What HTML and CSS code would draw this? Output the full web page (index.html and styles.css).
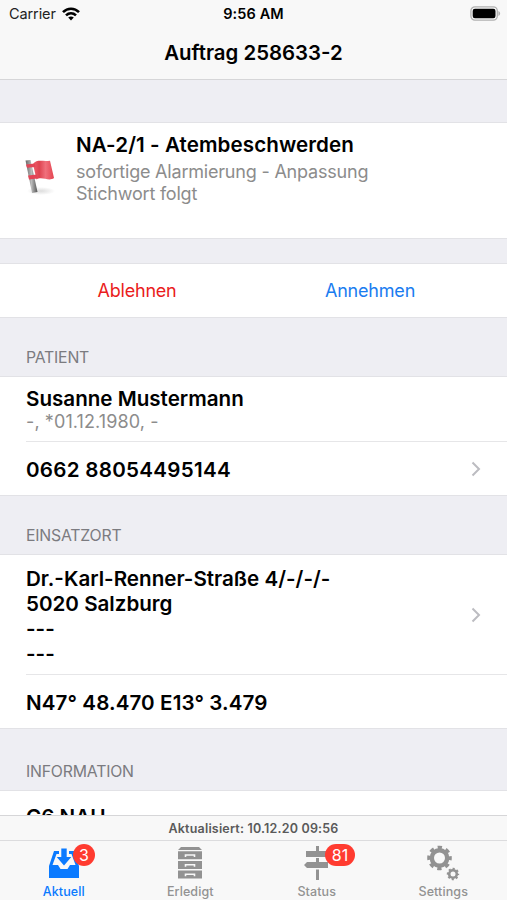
FILE: index.html
```html
<!DOCTYPE html>
<html lang="de">
<head>
    <meta charset="UTF-8">
    <meta name="viewport" content="width=device-width, initial-scale=1.0">
    <title>Auftrag 258633-2</title>
    <link rel="stylesheet" href="styles.css">
</head>
<body>
    <div class="app">
        <header class="top">
            <div class="status-bar">
                <div class="carrier">
                    <span>Carrier</span>
                    <svg class="wifi" viewBox="0 0 18 14" width="18" height="14">
                        <g fill="none" stroke="#000" stroke-width="2.6">
                            <path d="M1 5.2C5.5.6 12.500.6 17 5.200"/>
                            <path d="M4 8.400c2.900-2.700 7.100-2.700 10 0"/>
                        </g>
                        <path d="M6.200 10.500c1.700-1.300 3.900-1.300 5.600 0L9 13.400z"/>
                    </svg>
                </div>
                <span class="clock">9:56 AM</span>
                <svg class="battery" viewBox="0 0 31 15" width="31" height="15">
                    <rect x=".9" y=".9" width="26.400" height="13.200" rx="4" fill="#f8f8f8" stroke="#b0b0b0" stroke-width="1.300"/>
                    <rect x="2.700" y="2.700" width="22.800" height="9.600" rx="2.200"/>
                    <path d="M28.400 5c2.300.9 2.300 4.100 0 5z" fill="#b0b0b0"/>
                </svg>
            </div>
            <h1>Auftrag 258633-2</h1>
        </header>

        <main class="content">
            <section class="group alarm">
                <svg class="flag" viewBox="0 0 34 40" width="34" height="40">
                    <defs>
                        <linearGradient id="pole" x1="0" x2="1" y1="0" y2="0">
                            <stop offset="0" stop-color="#666"/>
                            <stop offset=".5" stop-color="#bbb"/>
                            <stop offset="1" stop-color="#555"/>
                        </linearGradient>
                        <linearGradient id="cloth" x1="0" x2="1" y1="0" y2="0">
                            <stop offset="0" stop-color="#f0606c"/>
                            <stop offset=".3" stop-color="#de4350"/>
                            <stop offset=".6" stop-color="#f0707c"/>
                            <stop offset="1" stop-color="#e44450"/>
                        </linearGradient>
                        <radialGradient id="shade">
                            <stop offset="0" stop-color="#ddd"/>
                            <stop offset="1" stop-color="#fff"/>
                        </radialGradient>
                    </defs>
                    <ellipse cx="20" cy="34" rx="14" ry="4" fill="url(#shade)"/>
                    <path d="M4.500 3.500l5-.6 7 32-5.500 1z" fill="url(#pole)"/>
                    <path d="M12 7c4-5 8-2.500 17-3.300L33 21c-5 4-12-2-17.500 1.500z" fill="url(#cloth)"/>
                    <path d="M5 7.500l9-1 .5 3.500-8.500.800zM7 18.500l9-1 .5 4-8.500 1z" fill="#e34556"/>
                </svg>
                <div>
                    <h2 class="alarm-title">NA-2/1 - Atembeschwerden</h2>
                    <p class="alarm-text">sofortige Alarmierung - Anpassung<br>Stichwort folgt</p>
                </div>
            </section>

            <section class="group actions">
                <button class="decline">Ablehnen</button>
                <button class="accept">Annehmen</button>
            </section>

            <h3 class="caption patient">PATIENT</h3>
            <section class="group">
                <div class="row person">
                    <h2 class="name">Susanne Mustermann</h2>
                    <p class="born">-, *01.12.1980, -</p>
                </div>
                <div class="row phone">
                    <h2>0662 88054495144</h2>
                    <svg class="chevron" viewBox="0 0 10 16" width="10" height="16"><path d="M1.500 1.500L8 8l-6.500 6.500"/></svg>
                </div>
            </section>

            <h3 class="caption place">EINSATZORT</h3>
            <section class="group">
                <div class="row address">
                    <h2>Dr.-Karl-Renner-Straße 4/-/-/-<br>5020 Salzburg<br>---<br>---</h2>
                    <svg class="chevron" viewBox="0 0 10 16" width="10" height="16"><path d="M1.500 1.500L8 8l-6.500 6.500"/></svg>
                </div>
                <div class="row coords">
                    <h2>N47° 48.470 E13° 3.479</h2>
                </div>
            </section>

            <h3 class="caption info">INFORMATION</h3>
            <section class="group last">
                <h2>C6 NAH</h2>
            </section>
        </main>

        <footer>
            <div class="updated">Aktualisiert: 10.12.20 09:56</div>
            <nav class="tabs">
                <a class="tab active">
                    <svg viewBox="0 0 30 32" width="30" height="32">
                        <path fill-rule="evenodd" d="M5 4h5v3H7.500L3.500 18H9l2.500 4h7l2.500-4h5.500L22.500 7H20V4h5l5 15v12H0V19z"/>
                        <path d="M12.300 1.500h5.400V10h4.600L15 18.500 7.700 10h4.600z"/>
                    </svg>
                    <span class="badge">3</span>
                    <span class="label">Aktuell</span>
                </a>
                <a class="tab">
                    <svg viewBox="0 0 26 34" width="26" height="34">
                        <path d="M4 1h18l3 3H1zM1 5.300h24v8H1zM1 15h24v8H1zM1 24.600h24v8H1z"/>
                        <path class="handle" d="M8.500 11V9h9v2M8.500 20.700v-2h9v2M8.500 30.300v-2h9v2"/>
                    </svg>
                    <span class="label">Erledigt</span>
                </a>
                <a class="tab">
                    <svg viewBox="0 0 26 36" width="26" height="36">
                        <path d="M12 1h3v5h8l3 3-3 3H2V6h10zM12 13h3v4h9v6H3l-3-3 3-3h9zM12 24.500h3V35h-3z"/>
                    </svg>
                    <span class="badge wide">81</span>
                    <span class="label">Status</span>
                </a>
                <a class="tab">
                    <svg viewBox="0 0 34 36" width="34" height="36">
                        <g fill="none" stroke="#929292">
                            <circle cx="13.500" cy="13" r="7.700" stroke-width="4.400"/>
                            <circle cx="13.500" cy="13" r="10.600" stroke-width="3.400" stroke-dasharray="4.300 4.025" stroke-dashoffset="2.150"/>
                            <circle cx="27" cy="29" r="3.800" stroke-width="2.600"/>
                            <circle cx="27" cy="29" r="5.200" stroke-width="2" stroke-dasharray="2.100 1.984" stroke-dashoffset="1.050"/>
                        </g>
                    </svg>
                    <span class="label">Settings</span>
                </a>
            </nav>
        </footer>
    </div>
</body>
</html>
```
FILE: styles.css
```css
* {
    box-sizing: border-box;
}

body {
    margin: 0;
    font-family: Inter, "Liberation Sans", sans-serif;
    color: #000;
}

h1, h2, h3, p {
    margin: 0;
}

.app {
    display: flex;
    flex-direction: column;
    width: 507px;
    height: 900px;
    overflow: hidden;
    background-color: #eeeef3;
}

.top {
    flex: none;
    height: 80px;
    background-color: #f8f8f8;
    border-bottom: 1px solid #d6d6d8;
}

.status-bar {
    display: grid;
    grid-template-columns: 1fr auto 1fr;
    align-items: center;
    height: 27px;
    padding: 0 6px 0 9px;
}

.carrier {
    display: flex;
    align-items: center;
    gap: 6px;
    font-size: 14.5px;
    letter-spacing: -0.1px;
    color: #222;
}

.clock {
    margin-right: 3px;
    font-size: 14.5px;
    font-weight: 600;
    letter-spacing: 0.1px;
}

.battery {
    justify-self: end;
}

h1 {
    font-size: 20.4px;
    font-weight: 600;
    line-height: 51px;
    text-align: center;
}

h2 {
    font-size: 20.6px;
    font-weight: 600;
    line-height: 25px;
    white-space: nowrap;
}

.content {
    flex: 1;
    min-height: 0;
    overflow: hidden;
    padding-top: 42px;
}

.group {
    background-color: #fff;
    border-top: 1px solid #e2e2e6;
    border-bottom: 1px solid #e2e2e6;
}

.alarm {
    display: flex;
    gap: 21px;
    height: 117px;
    padding: 9px 0 0 21px;
}

.alarm-title {
    letter-spacing: 0.08px;
}

.flag {
    margin-top: 25px;
}

.alarm-text {
    margin-top: 4px;
    font-size: 18px;
    letter-spacing: -0.2px;
    line-height: 22px;
    color: #8c8c8c;
}

.actions {
    display: grid;
    grid-template-columns: 233px 233px;
    justify-content: center;
    height: 55px;
    margin-top: 24px;
}

button {
    padding: 0;
    border: none;
    background: none;
    font: inherit;
    font-size: 18px;
    letter-spacing: -0.2px;
}

.decline {
    color: #ea1c20;
}

.accept {
    color: #1a7cf0;
}

.caption {
    height: 58px;
    padding: 30px 26px 0;
    font-size: 15.8px;
    font-weight: 400;
    letter-spacing: -0.2px;
    line-height: 20px;
    color: #7b7b80;
}

.row {
    display: flex;
    align-items: center;
    justify-content: space-between;
    margin-left: 26px;
    padding-right: 26px;
}

.row + .row {
    border-top: 1px solid #e6e6e8;
}

.person {
    display: block;
    height: 64px;
    padding-top: 9px;
}

.born {
    font-size: 18px;
    letter-spacing: 0.1px;
    line-height: 22px;
    color: #8c8c8c;
}

.phone {
    height: 54px;
}

.phone h2 {
    padding-top: 1px;
    letter-spacing: 0.27px;
}

.chevron path {
    fill: none;
    stroke: #bcbcc1;
    stroke-width: 2;
}

.address {
    height: 119px;
}

.address h2 {
    padding-top: 2px;
}

.coords {
    height: 54px;
}

.coords h2 {
    padding-top: 2px;
    letter-spacing: 0.1px;
}

.info {
    height: 61px;
    padding-top: 33px;
}

.last {
    height: 90px;
    padding: 13px 26px;
}

footer {
    flex: none;
    height: 85px;
    background-color: #f8f8f8;
}

.updated {
    height: 25px;
    border-top: 1px solid #d6d6d8;
    font-size: 12.5px;
    font-weight: 600;
    letter-spacing: 0.19px;
    line-height: 25px;
    text-align: center;
    color: #5a5a5a;
}

.tabs {
    display: grid;
    grid-template-columns: repeat(4, 126.5px);
    height: 60px;
    border-top: 1px solid #dcdcde;
    color: #929292;
}

.tab {
    position: relative;
    display: grid;
    grid-template-rows: 43px 14px;
    align-content: start;
    align-items: center;
    justify-items: center;
    padding-left: 1px;
    font-size: 12.5px;
    font-weight: 500;
    letter-spacing: 0.1px;
}

.tab svg {
    fill: #929292;
}

.tab .handle {
    fill: none;
    stroke: #f8f8f8;
    stroke-width: 1.6;
}

.active {
    color: #0a7aff;
}

.active svg {
    fill: #0a7aff;
}

.badge {
    position: absolute;
    top: 3px;
    left: 73px;
    min-width: 22px;
    height: 22px;
    border-radius: 11px;
    background-color: #ff3b30;
    color: #fff;
    font-size: 16px;
    font-weight: 400;
    line-height: 22px;
    text-align: center;
}

.wide {
    left: 72px;
    width: 30px;
}
```
